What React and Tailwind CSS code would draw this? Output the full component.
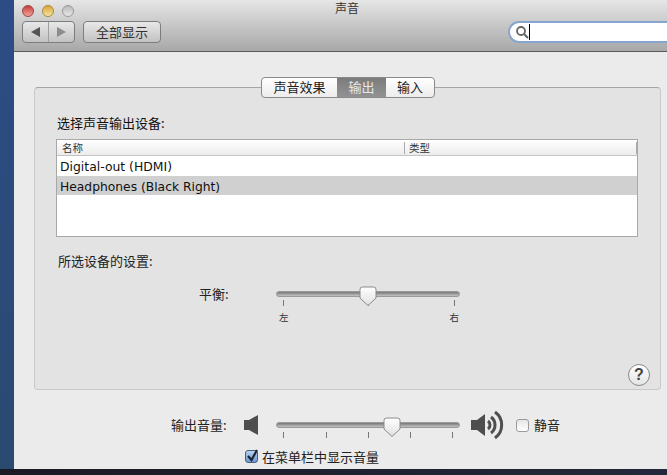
const cjk = 'font-["Noto_Sans_CJK_SC",sans-serif]';

function Thumb() {
  return (
    <svg width="18" height="21" viewBox="0 0 18 21" className="absolute top-[-6px]" style={{ left: 'var(--thumb)' }}>
      <defs>
        <linearGradient id="thumbFill" x1="0" y1="0" x2="0" y2="1">
          <stop offset="0" stopColor="#ffffff" />
          <stop offset="1" stopColor="#e0e0e0" />
        </linearGradient>
      </defs>
      <path d="M3.5 1h11a2.5 2.5 0 0 1 2.5 2.5V12l-8 7.5L1 12V3.5A2.5 2.5 0 0 1 3.5 1z" fill="url(#thumbFill)" stroke="#8a8a8a" />
    </svg>
  );
}

function Slider({ thumb, ticks, tickTop }) {
  return (
    <div className="relative w-[184px] h-[6px] rounded-full bg-gradient-to-b from-[#777] to-[#c4c4c4] border border-[#999]" style={{ '--thumb': `${thumb}px` }}>
      {ticks.map((t) => (
        <div key={t} className="absolute w-px h-[6px] bg-[#777]" style={{ left: t, top: tickTop }} />
      ))}
      <Thumb />
    </div>
  );
}

function CheckBox({ checked }) {
  return (
    <div className={`relative w-[13px] h-[13px] rounded-[3px] border ${checked ? 'border-[#4a5f80] bg-gradient-to-b from-[#b9cfee] to-[#6d98d3]' : 'border-[#9a9a9a] bg-gradient-to-b from-[#e6e6e6] to-white'}`}>
      {checked && (
        <svg width="15" height="15" viewBox="0 0 15 15" className="absolute left-[-1px] top-[-3px]">
          <path d="M3 8l3.5 4L12 2" fill="none" stroke="#1c2433" strokeWidth="2.2" />
        </svg>
      )}
    </div>
  );
}

export default function App() {
  return (
    <div className={`w-[667px] h-[475px] flex flex-col overflow-hidden bg-[#1c1c26] ${cjk}`}>
      <div className="flex h-[469px]">
        <div className="w-[14px] bg-gradient-to-b from-[#2c4c86] to-[#2b4a70]" />

        <div className="flex-1 flex flex-col bg-[#ebebeb]">
          {/* toolbar */}
          <div className="h-[52px] border-b border-[#5a5a5a] bg-gradient-to-b from-[#e6e6e6] to-[#a8a8a8]">
            <div className="relative flex items-center h-[21px] pl-[8px]">
              <div className="flex gap-[8px]">
                <div className="w-[12px] h-[12px] rounded-full border border-[#9b4444] bg-gradient-to-b from-[#c43c3c] to-[#f0a09a]" />
                <div className="w-[12px] h-[12px] rounded-full border border-[#a98a3a] bg-gradient-to-b from-[#d9a530] to-[#f7e3a0]" />
                <div className="w-[12px] h-[12px] rounded-full border border-[#9a9a9a] bg-gradient-to-b from-[#b9b9b9] to-[#e8e8e8]" />
              </div>
              <div className="absolute left-[321px] top-0 text-[12px] leading-[16px] text-[#333]">声音</div>
            </div>
            <div className="flex items-center h-[22px] pl-[8px]">
              <div className="flex w-[53px] h-[22px] rounded-[4px] border border-[#7d7d7d] bg-gradient-to-b from-[#e8e8e8] to-[#c2c2c2]">
                <div className="flex-1 flex items-center justify-center border-r border-[#a0a0a0]">
                  <svg width="9" height="10" viewBox="0 0 9 10"><path d="M0 5l9-5v10z" fill="#555" /></svg>
                </div>
                <div className="flex-1 flex items-center justify-center">
                  <svg width="9" height="10" viewBox="0 0 9 10"><path d="M9 5L0 0v10z" fill="#8c8c8c" /></svg>
                </div>
              </div>
              <div className="ml-[8px] w-[78px] h-[22px] flex items-center justify-center rounded-[4px] border border-[#7d7d7d] bg-gradient-to-b from-[#e8e8e8] to-[#c2c2c2] text-[13px] text-[#333]">全部显示</div>
              <div className="ml-[347px] flex-1 h-[22px] flex items-center pl-[5px] rounded-l-full border-2 border-r-0 border-[#86a5cf] bg-white">
                <svg width="14" height="14" viewBox="0 0 14 14">
                  <circle cx="6" cy="6" r="4" fill="none" stroke="#666" strokeWidth="1.8" />
                  <path d="M9 9l4 4" stroke="#666" strokeWidth="2.2" />
                </svg>
                <div className="w-px h-[16px] bg-black" />
              </div>
            </div>
          </div>

          {/* tabs */}
          <div className="relative z-10 flex ml-[247px] mt-[25px] w-[174px] h-[21px] rounded-[4px] border border-[#8a8a8a] bg-gradient-to-b from-white to-[#ececec] text-[13px] leading-[17px] text-[#222]">
            <div className="w-[75px] flex justify-center">声音效果</div>
            <div className="w-[49px] flex justify-center bg-gradient-to-b from-[#7c7c7c] to-[#929292] text-[#e8e8e8]">输出</div>
            <div className="flex-1 flex justify-center">输入</div>
          </div>

          {/* panel */}
          <div className="ml-[20px] mr-[6px] mt-[-11px] h-[303px] rounded-[4px] border border-[#c9c9c9] border-t-[#a5a5a5] bg-[#e3e3e3] flex flex-col">
            <div className="ml-[22px] mt-[26px] text-[13px] leading-[18px] text-[#111]">选择声音输出设备:</div>
            <div className="ml-[21px] mt-[7px] w-[582px] h-[98px] border border-[#a8a8a8] bg-white">
              <div className="flex h-[16px] items-center border-b border-[#c4c4c4] bg-gradient-to-b from-white to-[#ececec] text-[10.5px] text-[#333]">
                <div className="w-[348px] pl-[5px] border-r border-[#aaa] leading-[12px]">名称</div>
                <div className="pl-[4px] flex-1 leading-[12px] border-r border-[#aaa]">类型</div>
              </div>
              <div className="h-[20px] flex items-center pl-[3px] pt-[2px] text-[12.4px] text-[#111] font-['DejaVu_Sans',sans-serif]">Digital-out (HDMI)</div>
              <div className="h-[19px] flex items-center pl-[3px] pt-[3px] bg-[#d0d0d0] text-[12.3px] text-[#111] font-['DejaVu_Sans',sans-serif]">Headphones (Black Right)</div>
            </div>
            <div className="ml-[23px] mt-[15px] text-[13px] leading-[18px] text-[#222]">所选设备的设置:</div>

            <div className="flex mt-[15px] ml-[164px]">
              <div className="w-[77px] text-[13px] leading-[18px] text-[#222]">平衡:</div>
              <div className="pt-[6px]">
                <Slider thumb={82} ticks={[6, 91, 177]} tickTop={8} />
                <div className="flex justify-between w-[184px] pl-[3px] pr-[1px] mt-[14px] text-[9.5px] leading-[12px] text-[#333]">
                  <span>左</span>
                  <span>右</span>
                </div>
              </div>
            </div>

            <div className="mt-auto mb-[3px] mr-[10px] self-end w-[22px] h-[22px] rounded-full border border-[#8a8a8a] bg-gradient-to-b from-white to-[#e4e4e4] flex items-center justify-center text-[16px] font-bold text-[#444] font-['Liberation_Sans',sans-serif]">?</div>
          </div>

          {/* volume */}
          <div className="flex items-center mt-[25px] ml-[157px] h-[20px]">
            <div className="w-[73px] text-[13px] text-[#222]">输出音量:</div>
            <svg width="14" height="20" viewBox="0 0 14 20">
              <path d="M0 5h5l9-5v20l-9-5H0z" fill="#4e4e4e" />
            </svg>
            <div className="ml-[18px]">
              <Slider thumb={106} ticks={[6, 49, 91, 133, 175]} tickTop={9} />
            </div>
            <svg width="33" height="30" viewBox="0 0 33 30" className="ml-[11px]">
              <path d="M0 10h6l8-6v22l-8-6H0z" fill="#4e4e4e" />
              <path d="M17 11a5 5 0 0 1 0 8M20 7a10 10 0 0 1 0 16M24 2a16 16 0 0 1 0 26" fill="none" stroke="#4e4e4e" strokeWidth="3" />
            </svg>
            <div className="ml-[12px]"><CheckBox /></div>
            <div className="ml-[5px] text-[13px] text-[#222]">静音</div>
          </div>
          <div className="flex items-center mt-[14px] ml-[231px] h-[15px]">
            <CheckBox checked />
            <div className="ml-[4px] pt-[1px] text-[13px] text-[#222]">在菜单栏中显示音量</div>
          </div>
        </div>
      </div>
      <div className="flex-1 bg-gradient-to-r from-[#1a1a24] to-[#23283a]" />
    </div>
  );
}
